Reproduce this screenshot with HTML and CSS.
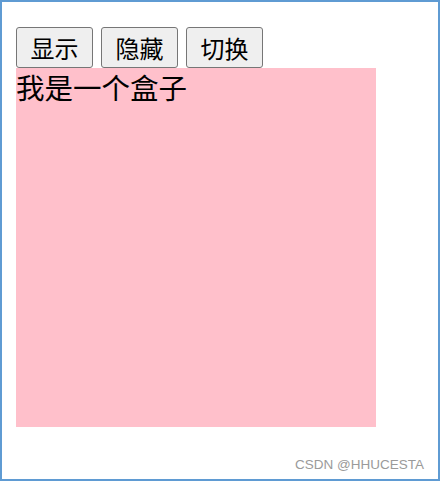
FILE: index.html
```html
<!DOCTYPE html>
<html>
<head>
<meta charset="utf-8">
<link rel="stylesheet" href="styles.css">
</head>
<body>
<div class="frame">
  <div class="btns">
    <button class="btn">显示</button>
    <button class="btn">隐藏</button>
    <button class="btn">切换</button>
  </div>
  <div class="box">我是一个盒子</div>
  <div class="mark">CSDN @HHUCESTA</div>
</div>
</body>
</html>
```
FILE: styles.css
```css
html, body { margin: 0; padding: 0; background: #fff; }
.frame {
  width: 440px; height: 481px; box-sizing: border-box;
  border: 2px solid #5f9bd3;
  padding: 25px 0 0 14px;
  position: relative;
  font-family: "Noto Sans CJK SC", sans-serif;
}
.btns { display: flex; gap: 8px; }
.btn {
  width: 77px; height: 41px; box-sizing: border-box;
  margin: 0; padding: 0;
  background: #efefef; border: 1px solid #767676; border-radius: 3px;
  font-family: "Noto Sans CJK SC", sans-serif; font-size: 24px; color: #000;
  line-height: 1;
}
.box {
  width: 360px; height: 359px; background: #ffc0cb;
  font-family: "Noto Sans CJK SC", sans-serif; font-size: 28.5px; line-height: 1.35; color: #000;
}
.mark {
  position: absolute; right: 14px; bottom: 7px;
  font-family: "Liberation Sans", Arial, sans-serif; font-size: 13.5px; color: #9a9a9a;
}
```
